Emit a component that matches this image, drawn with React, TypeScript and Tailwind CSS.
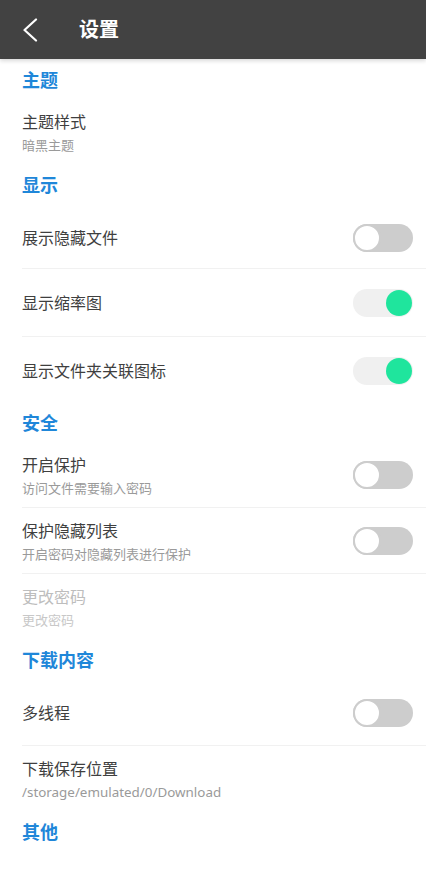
import React from "react";

const font = { fontFamily: '"Noto Sans", "Noto Sans CJK SC", sans-serif' };

function Toggle({ on }: { on: boolean }) {
  if (on) {
    return (
      <div className="relative w-[60px] h-[28px] rounded-full bg-[#f0f0f0] shrink-0">
        <div className="absolute right-[1px] top-[1px] w-[26px] h-[26px] rounded-full bg-[#1fe59d]" />
      </div>
    );
  }
  return (
    <div className="relative w-[60px] h-[28px] rounded-full bg-[#cdcdcd] shrink-0">
      <div className="absolute left-0 top-0 w-[28px] h-[28px] rounded-full bg-white border-2 border-[#cdcdcd]" />
    </div>
  );
}

function Heading({ text, h }: { text: string; h: string }) {
  return (
    <div className={`flex items-center pl-[22px] ${h}`}>
      <span className="text-[18px] font-bold text-[#1f87d9] leading-none">{text}</span>
    </div>
  );
}

function Row({
  title,
  sub,
  subClass,
  toggle,
  divider,
  disabled,
  h,
}: {
  title: string;
  sub?: string;
  subClass?: string;
  toggle?: boolean;
  divider?: boolean;
  disabled?: boolean;
  h: string;
}) {
  return (
    <div className={`relative flex items-center pl-[22px] pr-[13px] ${h}`}>
      <div className="flex-1 flex flex-col">
        <span className={`text-[16px] leading-[22px] ${disabled ? "text-[#bdbdbd]" : "text-[#3f3f3f]"}`}>{title}</span>
        {sub && (
          <span
            className={`${subClass ?? "text-[13px]"} leading-[18px] mt-[3px] ${disabled ? "text-[#c8c8c8]" : "text-[#9a9a9a]"}`}
          >
            {sub}
          </span>
        )}
      </div>
      {toggle !== undefined && <Toggle on={toggle} />}
      {divider && <div className="absolute left-[22px] right-0 bottom-0 h-px bg-[#f1f1f1]" />}
    </div>
  );
}

export default function App() {
  return (
    <div className="w-[426px] h-[870px] bg-white overflow-hidden" style={font}>
      <div className="relative z-10 h-[59px] bg-[#424242] flex items-center shadow-[0_2px_4px_rgba(0,0,0,0.15)]">
        <svg width="16" height="24" viewBox="0 0 16 24" className="ml-[22px]" fill="none">
          <polyline points="14,1.5 2.5,12 14,22.5" stroke="white" strokeWidth="2.2" strokeLinecap="round" strokeLinejoin="round" />
        </svg>
        <span className="ml-[41px] text-[20px] font-semibold text-white leading-none">设置</span>
      </div>
      <Heading text="主题" h="h-[42px]" />
      <Row title="主题样式" sub="暗黑主题" h="h-[63px]" />
      <Heading text="显示" h="h-[42px]" />
      <Row title="展示隐藏文件" toggle={false} divider h="h-[63px]" />
      <Row title="显示缩率图" toggle={true} divider h="h-[68px]" />
      <Row title="显示文件夹关联图标" toggle={true} h="h-[67px]" />
      <Heading text="安全" h="h-[38px]" />
      <Row title="开启保护" sub="访问文件需要输入密码" toggle={false} divider h="h-[66px]" />
      <Row title="保护隐藏列表" sub="开启密码对隐藏列表进行保护" toggle={false} divider h="h-[66px]" />
      <Row title="更改密码" sub="更改密码" disabled h="h-[66px]" />
      <Heading text="下载内容" h="h-[40px]" />
      <Row title="多线程" toggle={false} divider h="h-[66px]" />
      <Row title="下载保存位置" sub="/storage/emulated/0/Download" subClass="text-[13.4px]" h="h-[66px]" />
      <Heading text="其他" h="h-[40px]" />
    </div>
  );
}
